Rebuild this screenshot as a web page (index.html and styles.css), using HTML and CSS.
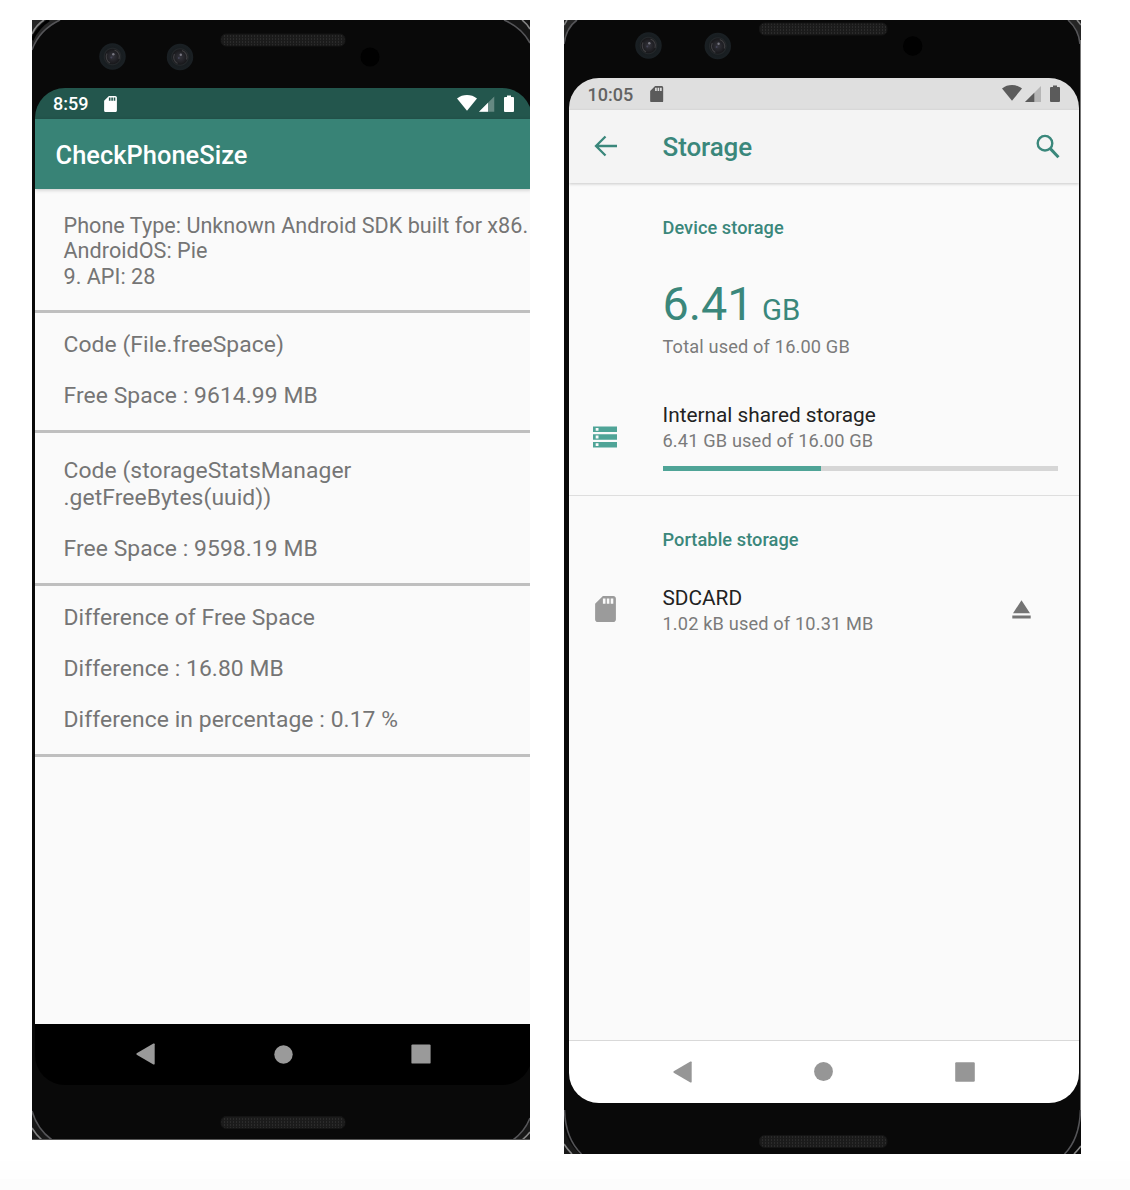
FILE: index.html
```html
<!DOCTYPE html>
<html lang="en">
<head>
<meta charset="utf-8">
<title>CheckPhoneSize</title>
<link rel="stylesheet" href="styles.css">
</head>
<body>
<svg class="defs" width="0" height="0" aria-hidden="true">
  <defs>
    <radialGradient id="lens"><stop offset="0" stop-color="#34343c"/><stop offset=".55" stop-color="#19191c"/><stop offset=".62" stop-color="#24282b"/><stop offset=".7" stop-color="#181d20"/><stop offset="1" stop-color="#1a2024"/></radialGradient>
    <pattern id="mesh" width="3" height="3" patternUnits="userSpaceOnUse"><rect width="3" height="3" fill="#1b1b1b"/><rect width="1" height="2" fill="#2b2b2b"/></pattern>
    <symbol id="camera" viewBox="0 0 28 28"><circle cx="14" cy="14" r="13.2" fill="url(#lens)"/><path d="M8.500 11a7 7 0 0 0 3 9.500M16 7.500a7 7 0 0 1 4.500 9" fill="none" stroke="#3e3e41" stroke-width="1.200"/><circle cx="14.800" cy="11.800" r="1.200" fill="#777781"/><circle cx="12.800" cy="15" r="1" fill="#444457"/></symbol>
    <symbol id="sd" viewBox="4 2 16 20"><path d="M18 2h-8L4.020 8 4 20c0 1.100.9 2 2 2h12c1.100 0 2-.9 2-2V4c0-1.100-.9-2-2-2zm-6 6h-2V4h2v4zm3 0h-2V4h2v4zm3 0h-2V4h2v4z"/></symbol>
    <symbol id="wifi" viewBox="0 0 20 16"><path d="M10 15.700 0 3.500C5.800-1.100 14.200-1.100 20 3.500z"/></symbol>
    <symbol id="signal" viewBox="0 0 16 16"><path d="M16 0v16H0z" opacity=".3"/><path d="M9.300 6.700V16H0z"/></symbol>
    <symbol id="battery" viewBox="0 0 10 17"><path d="M9 2H7V.4H3V2H1Q0 2 0 3v13q0 1 1 1h8q1 0 1-1V3q0-1-1-1z"/></symbol>
    <symbol id="back" viewBox="0 0 19 22"><path d="M17.400.6Q18.700 0 18.700 1.200v19.600q0 1.200-1.300.6L.7 11.700Q0 11 .7 10.300z"/></symbol>
  </defs>
</svg>
<main class="stage">
  <section class="phone phone-app">
    <svg class="bezel" width="498" height="1120" viewBox="0 0 498 1120">
      <path d="M0 0h29Q8 9 0 30z" fill="#252525"/><path d="M0 20Q6 7 17 0" class="edge-dark"/><path d="M0 14Q4 5 12 0" class="edge-light"/><path d="M0 30Q7 10 28 0" class="edge"/>
      <path d="M498 0h-26q18 8 26 23z" fill="#151515"/><path d="M498 23Q490 8 472 0" class="edge"/><path d="M498 9q-3-5-8-9" class="edge-light"/>
      <path d="M0 1091q6 18 20 29H0z" fill="#181818"/><path d="M0 1091q5 18 20 29" class="edge"/><path d="M0 1108q4 7 10 12" class="edge-light"/>
      <path d="M498 1098q-5 13-17 22h17z" fill="#181818"/><path d="M498 1098q-5 13-17 22" class="edge"/><path d="M498 1112q-3 4-8 8" class="edge-light"/>
      <use href="#camera" x="66.500" y="22.500" width="28" height="28"/><use href="#camera" x="134" y="23" width="28" height="28"/>
      <circle cx="338" cy="37" r="9.500" fill="#010101"/>
      <rect x="189" y="14" width="124" height="12" rx="5" fill="url(#mesh)" stroke="#141414"/>
      <rect x="189" y="1096.500" width="124" height="12" rx="5" fill="url(#mesh)" stroke="#141414"/>
      <path d="M0 1119.500h498" stroke="#555"/>
    </svg>
    <div class="screen">
      <div class="status">
        <span class="time">8:59</span>
        <svg class="st-sd" width="13" height="16"><use href="#sd"/></svg>
        <svg class="st-wifi" width="20" height="16"><use href="#wifi"/></svg>
        <svg class="st-signal" width="15.500" height="16"><use href="#signal"/></svg>
        <svg class="st-battery" width="10" height="17"><use href="#battery"/></svg>
      </div>
      <header class="toolbar"><h1>CheckPhoneSize</h1></header>
      <div class="content">
        <div class="block block-info"><p>Phone Type: Unknown Android SDK built for x86.</p><p>AndroidOS: Pie</p><p>9. API: 28</p></div>
        <div class="block block-file"><p>Code (File.freeSpace)</p><p>Free Space : 9614.99 MB</p></div>
        <div class="block block-stats"><p>Code (storageStatsManager<br>.getFreeBytes(uuid))</p><p>Free Space : 9598.19 MB</p></div>
        <div class="block block-diff"><p>Difference of Free Space</p><p>Difference : 16.80 MB</p><p>Difference in percentage : 0.17 %</p></div>
      </div>
      <nav class="navbar">
        <svg width="19" height="22"><use href="#back"/></svg>
        <svg width="19" height="19"><circle cx="9.500" cy="9.500" r="9.200"/></svg>
        <svg width="20" height="20"><rect x=".4" y=".4" width="19.200" height="19.200" rx="1.200"/></svg>
      </nav>
    </div>
  </section>

  <section class="phone phone-storage">
    <svg class="bezel" width="517" height="1134" viewBox="0 0 517 1134">
      <path d="M0 0h13Q3 7 0 22z" fill="#252525"/><path d="M0 24Q2 8 13 0" class="edge"/><path d="M0 5l3-5" class="edge-light"/>
      <path d="M517 0h-12q8 7 12 22z" fill="#252525"/><path d="M516 24q-1-14-12-24" class="edge"/><path d="M517 5l-4-5" class="edge-light"/>
      <path d="M516.500 20v1070" stroke="#777"/>
      <path d="M0 1108q4 16 16 26H0z" fill="#181818"/><path d="M.5 1090q1 29 17 44" class="edge"/><path d="M0 1124q3 5 8 10" class="edge-light"/>
      <path d="M516.500 1090q-1 29-16 44" class="edge"/><path d="M517 1126q-3 4-7 8" class="edge-light"/>
      <use href="#camera" x="70.500" y="11.500" width="28" height="28"/><use href="#camera" x="139.800" y="12" width="28" height="28"/>
      <circle cx="348.700" cy="26" r="9.700" fill="#010101"/>
      <rect x="195.500" y="3" width="127.500" height="12" rx="5" fill="url(#mesh)" stroke="#141414"/>
      <rect x="195.500" y="1115.500" width="127.500" height="12" rx="5" fill="url(#mesh)" stroke="#141414"/>
    </svg>
    <div class="screen">
      <div class="status">
        <span class="time">10:05</span>
        <svg class="st-sd" width="13.500" height="16.500"><use href="#sd"/></svg>
        <svg class="st-wifi" width="20" height="16"><use href="#wifi"/></svg>
        <svg class="st-signal" width="16" height="16"><use href="#signal"/></svg>
        <svg class="st-battery" width="10" height="17"><use href="#battery"/></svg>
      </div>
      <header class="toolbar">
        <svg class="arrow" width="24" height="22" viewBox="0 0 24 22"><path d="M11.500 1.500 2 11l9.500 9.500M2 11h21" fill="none" stroke="#3a877b" stroke-width="2.300"/></svg>
        <h1>Storage</h1>
        <svg class="search" width="24" height="25" viewBox="0 0 24 25"><circle cx="9" cy="9.200" r="7.300" fill="none" stroke="#3a877b" stroke-width="2.400"/><path d="m14.300 14.600 8.200 8.600" stroke="#3a877b" stroke-width="3"/></svg>
      </header>
      <div class="content">
        <div class="group group-device">
          <h2>Device storage</h2>
          <div class="total"><span class="amount">6.41</span><span class="unit">GB</span></div>
          <p class="sub total-sub">Total used of 16.00 GB</p>
          <div class="row">
            <svg class="row-icon" width="24" height="22" viewBox="0 0 24 22"><path d="M0 .5h24v5.600H0zM0 8.200h24v5.600H0zM0 15.900h24v5.600H0z" fill="#4fa497"/><path d="M2.700 2h2.800v2.800H2.700zM2.700 9.600h2.800v2.800H2.700zM2.700 17.300h2.800v2.800H2.700z" fill="#fafafa"/></svg>
            <div class="row-body">
              <h3>Internal shared storage</h3>
              <p class="sub">6.41 GB used of 16.00 GB</p>
              <div class="bar"><div class="fill" style="width:40.1%"></div></div>
            </div>
          </div>
        </div>
        <div class="group group-portable">
          <h2>Portable storage</h2>
          <div class="row">
            <svg class="row-icon sd-icon" width="21" height="26"><use href="#sd"/></svg>
            <div class="row-body">
              <h3>SDCARD</h3>
              <p class="sub">1.02 kB used of 10.31 MB</p>
            </div>
            <svg class="eject" width="19" height="19" viewBox="0 0 19 19"><path d="M9.500.3 18 13.200H1zM.3 15.500h18.400v2.900H.3z" fill="#747474"/></svg>
          </div>
        </div>
      </div>
      <nav class="navbar">
        <svg width="19" height="22"><use href="#back"/></svg>
        <svg width="19" height="19"><circle cx="9.500" cy="9.500" r="9.400"/></svg>
        <svg width="20" height="20"><rect x=".2" y=".2" width="19.600" height="19.600" rx="1.200"/></svg>
      </nav>
    </div>
  </section>
</main>
</body>
</html>
```
FILE: styles.css
```css
* { box-sizing: border-box; margin: 0; padding: 0; }
body { background: #fff; font-family: Roboto, "Liberation Sans", sans-serif; font-weight: 400; }
svg { display: block; flex: none; }
.defs { position: absolute; }
.stage { display: flex; align-items: flex-start; gap: 34px; height: 1190px; padding: 20px 0 0 32px; background: linear-gradient(#fff 1161px, #fefefe 1161px, #fefefe 1179px, #fcfcfc 1179px); }
.phone { position: relative; flex: none; overflow: hidden; background: #090909; }
.phone-app { width: 498px; height: 1119.5px; padding: 68px 0 0 3px; }
.phone-storage { width: 517px; height: 1134px; padding: 58px 2px 0 5px; }
.bezel { position: absolute; top: 0; left: 0; }
.edge, .edge-light, .edge-dark { fill: none; stroke: #555558; stroke-width: 1.6; }
.edge-light { stroke: #858585; }
.edge-dark { stroke: #000; stroke-width: 3; }

.screen { position: relative; display: flex; flex-direction: column; overflow: hidden; border-radius: 30px; }
.phone-app .screen { width: 497px; height: 996.5px; }
.phone-storage .screen { width: 510px; height: 1024.5px; }

.status { display: flex; align-items: flex-start; flex: none; }
.phone-app .status { height: 30.5px; padding-left: 18px; background: #23564d; fill: #fff; color: #fff; }
.phone-storage .status { height: 31.5px; padding-left: 18.5px; background: #dfdfdf; fill: #5b5b5b; color: #636363; }
.time { font-size: 18px; line-height: 22px; font-weight: 500; }
.phone-app .time { width: 51px; padding-top: 5px; }
.phone-storage .time { width: 62.5px; padding-top: 5.5px; }
.st-sd { margin-top: 7.5px; }
.st-wifi { margin: 7px 2.5px 0 auto; }
.st-signal { margin: 7.5px 9.5px 0 0; }
.st-battery { margin: 7px 19px 0 0; }
.phone-app .st-battery { margin-right: 18px; }

.toolbar { position: relative; z-index: 1; display: flex; flex: none; align-items: flex-start; }
.phone-app .toolbar { height: 70.5px; padding: 21px 0 0 20.5px; background: #388376; color: #fff; box-shadow: 0 1px 4px rgba(0,0,0,.2); }
.phone-storage .toolbar { height: 73px; padding-left: 25px; background: #f4f4f4; color: #3a877b; box-shadow: 0 1px 3px rgba(0,0,0,.2); }
h1 { font-size: 25.4px; line-height: 30px; font-weight: 500; letter-spacing: .05px; }
.phone-storage h1 { margin: 22.5px 0 0 44.5px; font-size: 26px; letter-spacing: -.1px; }
.arrow { margin-top: 25.5px; }
.search { margin: 24px 19.5px 0 auto; }

.content { flex: 1; background: #fafafa; }
.block { border-bottom: 3px solid #bfbfbf; padding-left: 28.5px; color: #757575; font-size: 22.85px; line-height: 26.7px; letter-spacing: .08px; white-space: nowrap; }
.block-info { padding-top: 24px; height: 124px; font-size: 21.6px; line-height: 25.3px; letter-spacing: .02px; }
.block-file { padding-top: 19.2px; height: 120px; }
.block-stats { padding-top: 25.1px; height: 152.5px; }
.block-diff { padding-top: 19.7px; height: 171.5px; }
.block-file p + p, .block-stats p + p, .block-diff p + p { margin-top: 24.4px; }

.group-device { height: 313.5px; padding-top: 34px; border-bottom: 1px solid #dedede; }
.group-portable { padding-top: 32.5px; }
h2 { margin-left: 93.5px; color: #3a877b; font-size: 18.2px; line-height: 22px; font-weight: 500; letter-spacing: .06px; }
.total { display: flex; align-items: baseline; gap: 8.5px; margin: 40px 0 0 93.5px; height: 50px; color: #3a877b; line-height: 50px; }
.amount { font-size: 46.7px; }
.unit { font-size: 29.4px; }
.sub { color: #7b7b7b; font-size: 18.2px; line-height: 22px; letter-spacing: .15px; }
.total-sub { margin: 7px 0 0 93.5px; }
.row { display: flex; padding-left: 24px; }
.group-device .row { margin-top: 44.9px; }
.group-portable .row { margin-top: 34.4px; }
.row-icon { width: 24px; margin: 23.5px 45.5px 0 0; }
.sd-icon { width: 21px; margin: 10.8px 47px 0 1.5px; fill: #9b9b9b; }
.row-body { width: 395.5px; }
.group-portable .row-body { width: 349.2px; }
h3 { color: #222; font-size: 20.8px; line-height: 26px; font-weight: 400; }
.row-body .sub { margin-top: 2px; }
.group-portable .row-body .sub { margin-top: 2.4px; }
.bar { height: 5.3px; margin-top: 13.4px; background: #d6d6d6; }
.fill { height: 100%; background: #4fa497; }
.eject { margin-top: 14.9px; }

.navbar { display: flex; flex: none; align-items: center; }
.phone-app .navbar { height: 60.5px; padding: 0 0 0 101px; gap: 118.7px; background: #000; fill: #9a9a9a; }
.phone-storage .navbar { height: 62.5px; padding: 0 0 0 103.5px; gap: 122px; border-top: 1.2px solid #d9d9d9; background: #fff; fill: #969696; }
```
